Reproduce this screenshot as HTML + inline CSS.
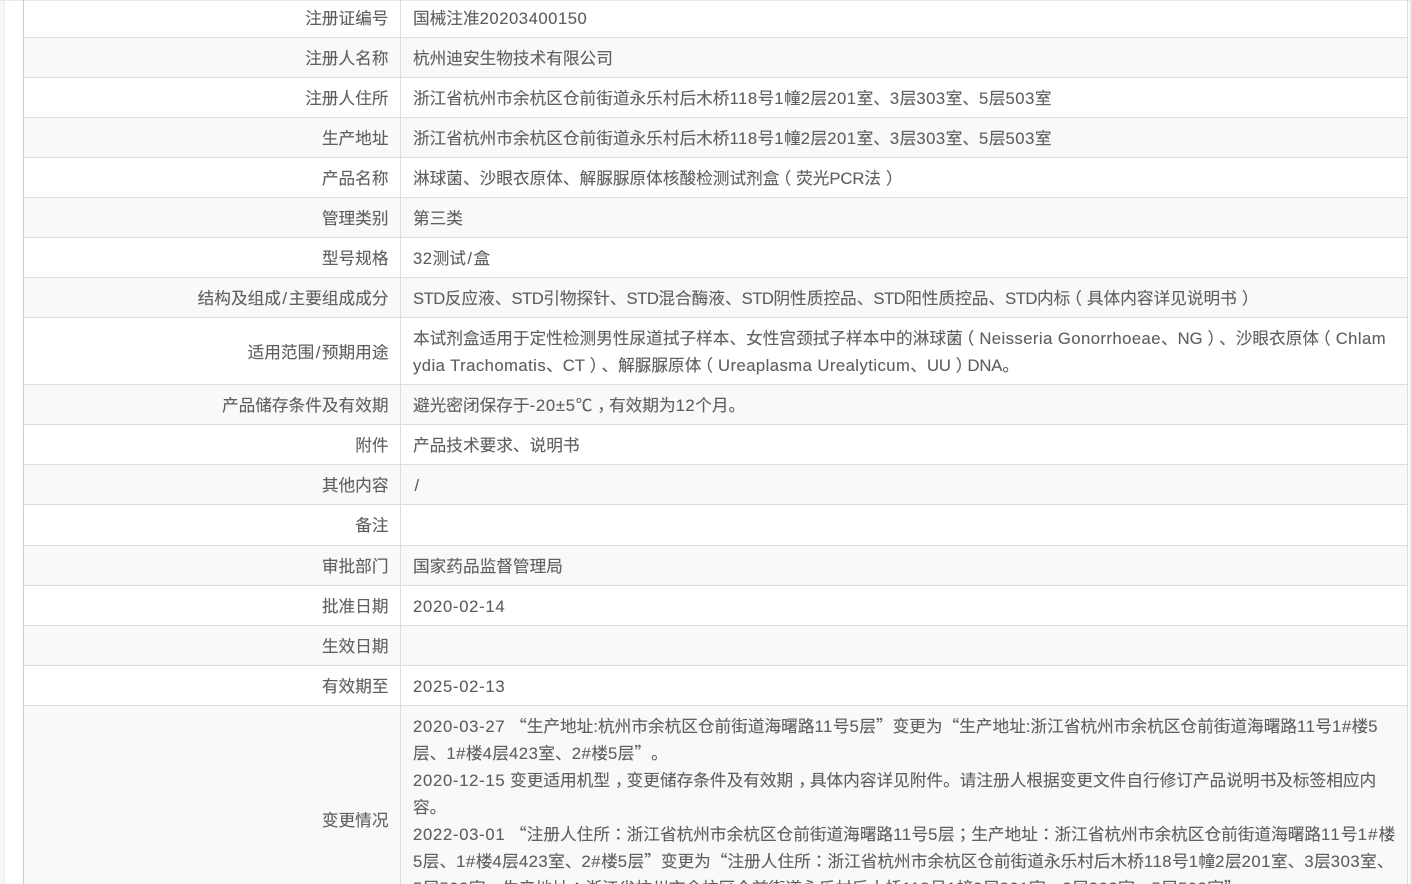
<!DOCTYPE html>
<html><head><meta charset="utf-8">
<style>
html,body{margin:0;padding:0;width:1412px;height:884px;overflow:hidden;background:#fff}
body{position:relative;font-family:"Liberation Sans","Noto Sans CJK SC",sans-serif;font-size:16.66px;color:#5f5f5f;-webkit-text-stroke:.12px #5f5f5f}
.r{position:absolute;left:23px;width:1385px;border-left:1px solid #ccc;border-right:1px solid #ddd;border-bottom:1px solid #ddd;box-sizing:border-box}
.e{background:#f9f9f9}
.s{position:absolute;left:376px;top:0;bottom:0;width:1px;background:#ddd}
.l,.t{position:absolute;white-space:nowrap;line-height:27px;margin-top:1px}
.l{right:1018.5px;text-align:right}
.t{left:389px}
i{font-style:normal;letter-spacing:.53px}
i.d{letter-spacing:.72px}
i.u{letter-spacing:-.1px}
i.v{letter-spacing:-.5px}
i.n{letter-spacing:.45px}
i.h{letter-spacing:1.28px}
i.k{letter-spacing:0;padding:0 1.5px}
b,em{display:inline-block;width:1em;line-height:16px;font-weight:400;font-style:normal}
b{font-family:"Noto Sans CJK SC",sans-serif}
b.m{position:relative;left:5px}
em{font-family:"Noto Sans CJK TC",sans-serif}
em.o{position:relative;left:-5px}
em.c{position:relative;left:5px}
</style></head><body>
<div style="position:absolute;left:0;top:0;width:4px;height:884px;background:#f7f7f7;border-right:1px solid #eee"></div>
<div style="position:absolute;right:0;top:0;width:2px;height:884px;background:#e4e4e4"></div>
<div style="position:absolute;left:0;top:0;width:1412px;height:1px;background:#e8e8e8"></div>

<div class="r" style="top:-3px;height:41px"><div class="s"></div><div class="l" style="top:7px">注册证编号</div><div class="t" style="top:7px">国械注准<i>20203400150</i></div></div>
<div class="r e" style="top:38px;height:40px"><div class="s"></div><div class="l" style="top:6px">注册人名称</div><div class="t" style="top:6px">杭州迪安生物技术有限公司</div></div>
<div class="r" style="top:78px;height:40px"><div class="s"></div><div class="l" style="top:6px">注册人住所</div><div class="t" style="top:6px">浙江省杭州市余杭区仓前街道永乐村后木桥<i>118</i>号<i>1</i>幢<i>2</i>层<i>201</i>室、<i>3</i>层<i>303</i>室、<i>5</i>层<i>503</i>室</div></div>
<div class="r e" style="top:118px;height:40px"><div class="s"></div><div class="l" style="top:6px">生产地址</div><div class="t" style="top:6px">浙江省杭州市余杭区仓前街道永乐村后木桥<i>118</i>号<i>1</i>幢<i>2</i>层<i>201</i>室、<i>3</i>层<i>303</i>室、<i>5</i>层<i>503</i>室</div></div>
<div class="r" style="top:158px;height:40px"><div class="s"></div><div class="l" style="top:6px">产品名称</div><div class="t" style="top:6px">淋球菌、沙眼衣原体、解脲脲原体核酸检测试剂盒<em class="o">（</em>荧光<i class="u">PCR</i>法<em class="c">）</em></div></div>
<div class="r e" style="top:198px;height:40px"><div class="s"></div><div class="l" style="top:6px">管理类别</div><div class="t" style="top:6px">第三类</div></div>
<div class="r" style="top:238px;height:40px"><div class="s"></div><div class="l" style="top:6px">型号规格</div><div class="t" style="top:6px"><i>32</i>测试<i class="k">/</i>盒</div></div>
<div class="r e" style="top:278px;height:40px"><div class="s"></div><div class="l" style="top:6px">结构及组成<i class="k">/</i>主要组成成分</div><div class="t" style="top:6px"><i class="v">STD</i>反应液、<i class="v">STD</i>引物探针、<i class="v">STD</i>混合酶液、<i class="v">STD</i>阴性质控品、<i class="v">STD</i>阳性质控品、<i class="v">STD</i>内标<em class="o">（</em>具体内容详见说明书<em class="c">）</em></div></div>
<div class="r" style="top:318px;height:67px"><div class="s"></div><div class="l" style="top:20px">适用范围<i class="k">/</i>预期用途</div>
<div class="t" style="top:6px">本试剂盒适用于定性检测男性尿道拭子样本、女性宫颈拭子样本中的淋球菌<em class="o">（</em><i class="n">Neisseria Gonorrhoeae</i>、<i class="u">NG</i><em class="c">）</em>、沙眼衣原体<em class="o">（</em><i class="n">Chlam</i></div>
<div class="t" style="top:33px"><i class="n">ydia Trachomatis</i>、<i class="u">CT</i><em class="c">）</em>、解脲脲原体<em class="o">（</em><i class="n">Ureaplasma Urealyticum</i>、<i class="u">UU</i><em class="c">）</em><i class="u">DNA</i>。</div></div>
<div class="r e" style="top:385px;height:40px"><div class="s"></div><div class="l" style="top:6px">产品储存条件及有效期</div><div class="t" style="top:6px">避光密闭保存于<i class="d">-20±5</i>℃<b class="m">，</b>有效期为<i>12</i>个月。</div></div>
<div class="r" style="top:425px;height:40px"><div class="s"></div><div class="l" style="top:6px">附件</div><div class="t" style="top:6px">产品技术要求、说明书</div></div>
<div class="r e" style="top:465px;height:40px"><div class="s"></div><div class="l" style="top:6px">其他内容</div><div class="t" style="top:6px"><i class="k">/</i></div></div>
<div class="r" style="top:505px;height:41px"><div class="s"></div><div class="l" style="top:6px">备注</div></div>
<div class="r e" style="top:546px;height:40px"><div class="s"></div><div class="l" style="top:6px">审批部门</div><div class="t" style="top:6px">国家药品监督管理局</div></div>
<div class="r" style="top:586px;height:40px"><div class="s"></div><div class="l" style="top:6px">批准日期</div><div class="t" style="top:6px"><i class="d">2020-02-14</i></div></div>
<div class="r e" style="top:626px;height:40px"><div class="s"></div><div class="l" style="top:6px">生效日期</div></div>
<div class="r" style="top:666px;height:40px"><div class="s"></div><div class="l" style="top:6px">有效期至</div><div class="t" style="top:6px"><i class="d">2025-02-13</i></div></div>
<div class="r e" style="top:706px;height:190px;border-bottom:0"><div class="s"></div><div class="l" style="top:100px">变更情况</div>
<div class="t" style="top:6px"><i class="d">2020-03-27</i> <b>“</b>生产地址:杭州市余杭区仓前街道海曙路<i>11</i>号<i>5</i>层<b>”</b>变更为<b>“</b>生产地址:浙江省杭州市余杭区仓前街道海曙路<i>11</i>号<i>1#</i>楼<i>5</i></div>
<div class="t" style="top:33px">层、<i>1#</i>楼<i>4</i>层<i>423</i>室、<i>2#</i>楼<i>5</i>层<b>”</b>。</div>
<div class="t" style="top:60px"><i class="d">2020-12-15</i> 变更适用机型<b class="m">，</b>变更储存条件及有效期<b class="m">，</b>具体内容详见附件。请注册人根据变更文件自行修订产品说明书及标签相应内</div>
<div class="t" style="top:87px">容。</div>
<div class="t" style="top:114px"><i class="d">2022-03-01</i> <b>“</b>注册人住所<em>：</em>浙江省杭州市余杭区仓前街道海曙路<i>11</i>号<i>5</i>层<em>；</em>生产地址<em>：</em>浙江省杭州市余杭区仓前街道海曙路<i class="h">11</i>号<i class="h">1#</i>楼</div>
<div class="t" style="top:141px"><i>5</i>层、<i>1#</i>楼<i>4</i>层<i>423</i>室、<i>2#</i>楼<i>5</i>层<b>”</b>变更为<b>“</b>注册人住所<em>：</em>浙江省杭州市余杭区仓前街道永乐村后木桥<i>118</i>号<i>1</i>幢<i>2</i>层<i>201</i>室、<i>3</i>层<i>303</i>室、</div>
<div class="t" style="top:168px"><i>5</i>层<i>503</i>室、生产地址<em>：</em>浙江省杭州市余杭区仓前街道永乐村后木桥<i>118</i>号<i>1</i>幢<i>2</i>层<i>201</i>室、<i>3</i>层<i>303</i>室、<i>5</i>层<i>503</i>室<b>”</b></div>
</div>
</body></html>
